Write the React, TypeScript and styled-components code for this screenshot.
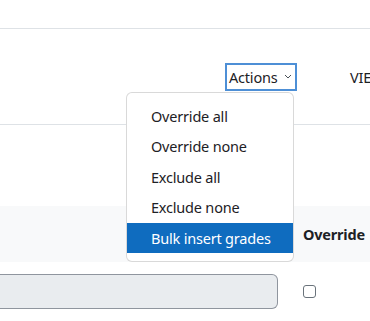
import React from "react";
import styled, { createGlobalStyle } from "styled-components";

const GlobalStyle = createGlobalStyle`
  html, body {
    margin: 0;
    padding: 0;
    background: #ffffff;
  }
  body {
    font-family: "Noto Sans", "Open Sans", sans-serif;
    font-size: 14.5px;
    letter-spacing: -0.2px;
    color: #1d2125;
  }
`;

const Page = styled.div`
  width: 370px;
  height: 321px;
  overflow: hidden;
`;

const TopBar = styled.div`
  height: 28px;
  border-bottom: 1px solid #dee2e6;
`;

const Toolbar = styled.div`
  height: 95px;
  display: flex;
  align-items: center;
  padding-left: 225px;
  border-bottom: 1px solid #dee2e6;
  white-space: nowrap;
`;

const ActionsWrap = styled.div`
  position: relative;
`;

const ActionsButton = styled.button`
  display: flex;
  align-items: center;
  gap: 7px;
  box-sizing: border-box;
  width: 72px;
  height: 28px;
  padding: 0 0 0 2px;
  border: 2px solid #4d8fd6;
  background: #ffffff;
  font: inherit;
  letter-spacing: inherit;
  color: #1d2125;
  cursor: pointer;
`;

const Separator = styled.div`
  width: 1px;
  height: 44px;
  background: #dee2e6;
  margin-left: 23px;
`;

const ViewLabel = styled.span`
  margin-left: 30px;
  color: #1d2125;
`;

const Menu = styled.ul`
  position: absolute;
  top: 29px;
  left: -99px;
  z-index: 10;
  box-sizing: border-box;
  width: 168px;
  margin: 0;
  padding: 8px 0;
  list-style: none;
  background: #ffffff;
  border: 1px solid rgba(0, 0, 0, 0.15);
  border-radius: 6px;
`;

const MenuItem = styled.li<{ $active?: boolean }>`
  padding: 0 24px;
  line-height: 30.5px;
  white-space: nowrap;
  color: ${(p) => (p.$active ? "#ffffff" : "#1d2125")};
  background: ${(p) => (p.$active ? "#0f6cbf" : "transparent")};
`;

const Table = styled.div`
  margin-top: 81px;
  display: grid;
  grid-template-columns: 303px 1fr;
`;

const HeaderCell = styled.div`
  height: 56px;
  background: #f8f9fa;
  display: flex;
  align-items: center;
  font-weight: 700;
  white-space: nowrap;
`;

const BodyCell = styled.div`
  padding-top: 12px;
  display: flex;
  align-items: center;
  height: 35px;
`;

const GradeInput = styled.div`
  box-sizing: border-box;
  width: 278px;
  height: 35px;
  background: #e9ecef;
  border: 1px solid #8f959e;
  border-left: none;
  border-radius: 0 6px 6px 0;
`;

const CheckBox = styled.span`
  box-sizing: border-box;
  width: 13px;
  height: 13px;
  border: 1px solid #6a737b;
  border-radius: 3px;
  background: #ffffff;
`;

const items = ["Override all", "Override none", "Exclude all", "Exclude none", "Bulk insert grades"];

export default function App() {
  return (
    <>
      <GlobalStyle />
      <Page>
        <TopBar />
        <Toolbar>
          <ActionsWrap>
            <ActionsButton>
              Actions
              <svg width="8" height="5" viewBox="0 0 8 5">
                <path d="M1 1l3 3 3-3" fill="none" stroke="#495057" strokeWidth="1" />
              </svg>
            </ActionsButton>
            <Menu>
              {items.map((t, i) => (
                <MenuItem key={t} $active={i === items.length - 1}>
                  {t}
                </MenuItem>
              ))}
            </Menu>
          </ActionsWrap>
          <Separator />
          <ViewLabel>VIEW</ViewLabel>
        </Toolbar>
        <Table>
          <HeaderCell />
          <HeaderCell>Override</HeaderCell>
          <BodyCell>
            <GradeInput />
          </BodyCell>
          <BodyCell>
            <CheckBox />
          </BodyCell>
        </Table>
      </Page>
    </>
  );
}
